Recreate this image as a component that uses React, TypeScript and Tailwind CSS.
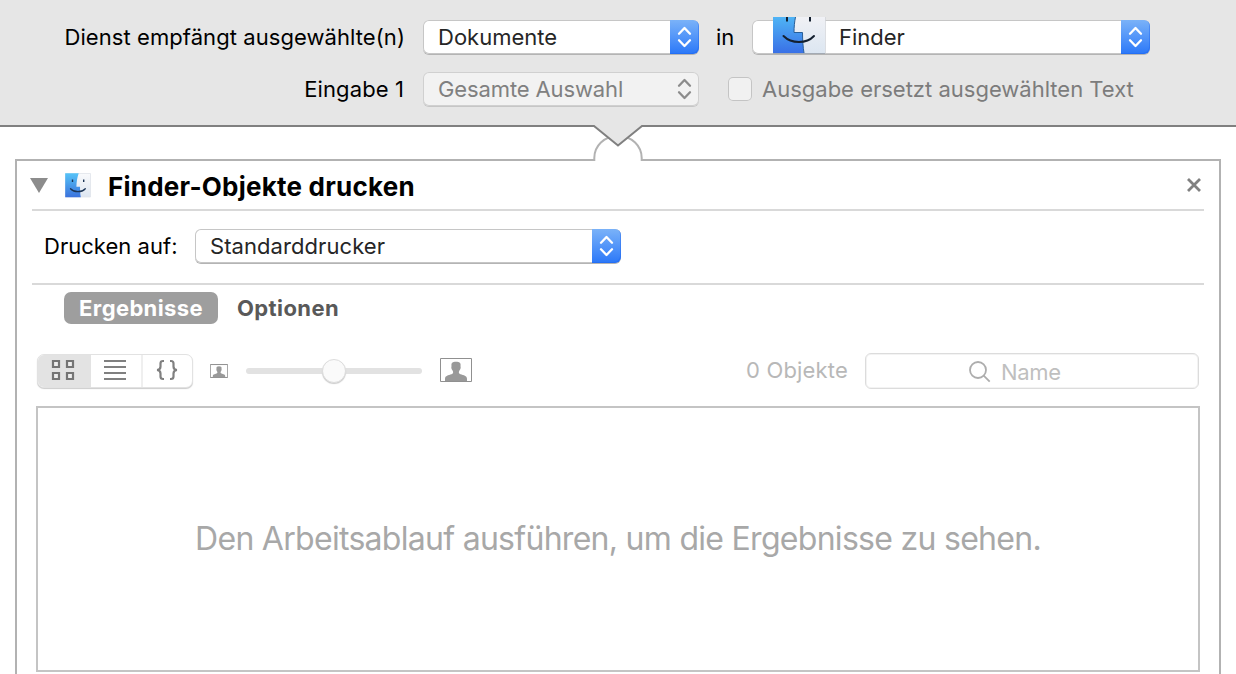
import React from "react";

function Chevrons({ color }: { color: string }) {
  return (
    <svg width="29" height="34" viewBox="0 0 29 34" fill="none" stroke={color} strokeWidth="2.3" strokeLinecap="round" strokeLinejoin="round">
      <path d="M9 13.700l5.500-5.700 5.500 5.700M9 20.300l5.500 5.700 5.500-5.700" />
    </svg>
  );
}

function Stepper() {
  return (
    <div className="h-[34px] w-[29px] shrink-0 rounded-r-[6px] bg-linear-to-b from-[#7ab2f8] to-[#2a77f8] shadow-[inset_-1px_-1px_0_#1c62ee66]">
      <Chevrons color="#fff" />
    </div>
  );
}

function Select({ className, children }: { className: string; children: React.ReactNode }) {
  return (
    <div className={`flex h-[34px] items-center rounded-[6px] bg-white text-[#262626] shadow-[inset_0_0_0_1px_#c6c6c6,0_1px_0_#b4b4b4] ${className}`}>
      <div className="flex h-full flex-1 items-center">{children}</div>
      <Stepper />
    </div>
  );
}

function FinderLarge() {
  return (
    <svg className="ml-[20px] h-[37px] w-[54px] shrink-0 self-end" viewBox="0 0 54 37" fill="none">
      <defs>
        <linearGradient id="lb" x1="0" y1="0" x2="0" y2="1">
          <stop stopColor="#4fb4f5" />
          <stop offset="1" stopColor="#3970e6" />
        </linearGradient>
        <linearGradient id="lw" x1="0" y1="0" x2="0" y2="1">
          <stop stopColor="#f0f1f5" />
          <stop offset="1" stopColor="#dce6f1" />
        </linearGradient>
      </defs>
      <path d="M1 0h52v36H1z" fill="url(#lw)" />
      <path d="M1 0h22.500c-1 5-1.500 10-1.500 15.500h8.500C30.500 23 31 30 32 36H1z" fill="url(#lb)" />
      <path d="M23.500 0c-1 5-1.500 10-1.500 15.500h8.500C30.500 23 31 30 32 36" stroke="#285f98" />
      <path d="M11.500 19c8 8 23 8 30.500 0" stroke="#14202f" strokeWidth="2" strokeLinecap="round" />
      <path d="M15 0v4.500M38 0v4.500" stroke="#14202f" strokeWidth="2" />
      <path d="M1 36.500h52" stroke="#a3aab3" />
      <path d="M53.500 0v36" stroke="#d3d6da" strokeWidth=".8" />
    </svg>
  );
}

function FinderSmall() {
  return (
    <svg className="h-[25px] w-[27px]" viewBox="0 0 27 25" fill="none">
      <defs>
        <linearGradient id="sb" x1="0" y1="0" x2="0" y2="1">
          <stop stopColor="#56c4f8" />
          <stop offset="1" stopColor="#3b72dc" />
        </linearGradient>
        <linearGradient id="sw" x1="0" y1="0" x2="0" y2="1">
          <stop stopColor="#f9fafc" />
          <stop offset="1" stopColor="#dde6f1" />
        </linearGradient>
      </defs>
      <path d="M.5.5h25v23.500H.5z" fill="url(#sw)" stroke="#dfe3ea" strokeWidth=".8" />
      <path d="M.2.2h13.500C12.200 4.500 11.500 9 11.400 13.700H15c0 3.800.2 7 .8 10.500H.2z" fill="url(#sb)" />
      <path d="M5.500 15.700c4 4 11 4 14.800 0" stroke="#1c3557" strokeWidth="1.300" strokeLinecap="round" />
      <path d="M7.500 6.500v2.400M18.700 6.500v2.400" stroke="#1c3557" strokeWidth="1.400" />
    </svg>
  );
}

function Portrait({ className }: { className: string }) {
  return (
    <svg className={className} viewBox="0 0 32 24">
      <path d="M.5.5h31v23H.5z" fill="#fff" stroke="#909090" vectorEffect="non-scaling-stroke" />
      <path d="M11.500 8c-.5-3 1-4.300 4.500-4.300s5 1.300 4.500 4.300c.6 2-.3 3.500-1.200 4.800-.7 1.200-.6 2.400.3 3 2 1.300 7.400 1.300 7.400 5V23H5v-2.200c0-3.700 5.400-3.700 7.400-5 .9-.6 1-1.800.3-3-.9-1.300-1.800-2.800-1.200-4.800z" fill="#999" />
    </svg>
  );
}

export default function App() {
  return (
    <div className="flex h-[674px] w-[1236px] flex-col overflow-hidden bg-white font-['Inter',sans-serif] text-[22px] leading-[34px] whitespace-nowrap text-black">
      <header className="relative h-[127px] shrink-0 border-b-2 border-[#808080] bg-[#e6e6e6] pt-[20px]">
        <div className="flex h-[34px] items-center">
          <div className="flex w-[405px] justify-end"><span className="tracking-[0.07px]">Dienst empfängt ausgewählte(n)</span></div>
          <Select className="ml-[18px] w-[276px]"><span className="pl-[15px]">Dokumente</span></Select>
          <span className="ml-[17px] w-[36px]">in</span>
          <Select className="w-[398px]">
            <FinderLarge />
            <span className="pl-[13px]">Finder</span>
          </Select>
        </div>
        <div className="mt-[18px] flex h-[34px] items-center">
          <div className="flex w-[405px] justify-end pr-px"><span className="tracking-[0.1px]">Eingabe 1</span></div>
          <div className="ml-[18px] flex h-[34px] w-[276px] items-center justify-between rounded-[6px] bg-[#f2f2f2] pl-[15px] text-[#808080] shadow-[inset_0_0_0_1px_#d0d0d0,0_1px_0_#c6c6c6]">
            <span className="tracking-[-0.12px]">Gesamte Auswahl</span>
            <Chevrons color="#8c8c8c" />
          </div>
          <div className="ml-[29px] size-[24px] rounded-[5px] bg-[#f1f1f1] shadow-[inset_0_0_0_1px_#c4c4c4]" />
          <span className="ml-[10px] text-[#7c7c7c]">Ausgabe ersetzt ausgewählten Text</span>
        </div>
        <svg className="absolute top-[125px] left-[590px] z-10 h-[36px] w-[56px]" viewBox="0 0 56 36" fill="none">
          <path d="M5 33h46v3H5z" fill="#fff" />
          <path d="M0 35h4.300v-2C4.300 21 14 11 28 11s23.700 10 23.700 22v2H56" fill="#fff" stroke="#b2b2b2" strokeWidth="2" />
          <path d="M0 0h56v1h-4L28 20.500 4 1H0z" fill="#e6e6e6" />
          <path d="M0 1h4l24 19.500L52 1h4" stroke="#808080" strokeWidth="2" />
        </svg>
      </header>

      <main className="mt-[32px] ml-[15px] h-[560px] w-[1206px] shrink-0 border-2 border-[#b2b2b2]">
        <div className="mx-[15px] flex h-[50px] items-center border-b-2 border-[#d9d9d9]">
          <svg className="-ml-[2px] h-[16px] w-[18px]" viewBox="0 0 18 16"><path d="M0 1h18L9 16z" fill="#8c8c8c" /></svg>
          <div className="ml-[17px] w-[43px]"><FinderSmall /></div>
          <h1 className="flex-1 pt-[3px] text-[26px] font-bold tracking-[0.23px]">Finder-Objekte drucken</h1>
          <svg className="mr-[3px] size-[14px]" viewBox="0 0 14 14" stroke="#808080" strokeWidth="2.800"><path d="M1 1l12 12M13 1L1 13" /></svg>
        </div>
        <div className="mx-[15px] flex h-[74px] items-center border-b-2 border-[#d9d9d9] pb-[2px] pl-[12px]">
          <span className="w-[151px] tracking-[0.03px]">Drucken auf:</span>
          <Select className="w-[426px]"><span className="pl-[15px] tracking-[0.07px]">Standarddrucker</span></Select>
        </div>

        <nav className="mt-[7px] ml-[47px] flex h-[32px] items-center font-bold">
          <span className="flex h-[32px] w-[154px] items-center justify-center rounded-[7px] bg-[#9e9e9e] tracking-[0.37px] text-white">Ergebnisse</span>
          <span className="ml-[19px] tracking-[0.4px] text-[#595959]">Optionen</span>
        </nav>

        <div className="mt-[28px] ml-[20px] flex h-[38px] items-center">
          <div className="flex h-[34px] w-[156px] overflow-hidden rounded-[7px] border border-[#e2e2e2] bg-white shadow-[0_1px_1px_#ccc]">
            <div className="flex w-[53px] items-center justify-center bg-[#e3e3e3] pr-[3px] pb-[2px]">
              <svg className="h-[22px] w-[24px]" viewBox="0 0 24 22" fill="#eee" stroke="#757575" strokeWidth="2.200"><path d="M2 2h6v6h-6zM16 2h6v6h-6zM2 14h6v6h-6zM16 14h6v6h-6z" /></svg>
            </div>
            <div className="flex w-[52px] items-center justify-center border-r-2 border-[#efefef] pr-[2px] pb-[2px]">
              <svg className="h-[20px] w-[22px]" viewBox="0 0 22 20" stroke="#808080" strokeWidth="2"><path d="M0 1h22M0 7h22M0 13h22M0 19h22" /></svg>
            </div>
            <div className="flex flex-1 items-center justify-center pr-[2px] pb-[2px]">
              <svg className="h-[22px] w-[24px]" viewBox="0 0 24 22" fill="none" stroke="#808080" strokeWidth="2.200"><path d="M9 2H8Q5.500 2 5.500 4.500v3Q5.500 10.800 2 11q3.500.2 3.500 3.500v3Q5.500 20 8 20h1M15 2h1q2.500 0 2.500 2.500v3q0 3.300 3.500 3.500-3.500.2-3.500 3.500v3Q18.500 20 16 20h-1" /></svg>
            </div>
          </div>
          <Portrait className="ml-[17px] h-[14px] w-[18px]" />
          <div className="ml-[18px] flex h-[6px] w-[176px] items-center rounded-full bg-[#e2e2e2]">
            <div className="ml-[76px] size-[24px] rounded-full border border-[#ddd] bg-[#fafafa] shadow-[0_1px_1px_#ccc]" />
          </div>
          <Portrait className="mb-[2px] ml-[18px] h-[24px] w-[32px]" />
          <div className="flex w-[376px] justify-end pb-[2px] text-[#b8b8b8]"><span className="tracking-[0.17px]">0 Objekte</span></div>
          <div className="ml-[17px] flex h-[36px] w-[334px] items-center rounded-[6px] border border-[#dcdcdc] pl-[103px] text-[#bfbfbf] shadow-[inset_0_0_0_1px_#f3f3f3]">
            <svg className="mt-[2px] size-[22px]" viewBox="0 0 22 22" fill="none" stroke="#adadad" strokeWidth="1.800"><circle cx="9" cy="9" r="8" /><path d="M14.700 14.700l6 6" /></svg>
            <span className="ml-[10px] pt-[2px] tracking-[-0.3px]">Name</span>
          </div>
        </div>

        <section className="mt-[16px] ml-[19px] flex h-[266px] w-[1164px] items-center justify-center border-2 border-[#c4c4c4] text-[32px] text-[#a8a8a8]">
          <span className="tracking-[-0.71px]">Den Arbeitsablauf ausführen, um die Ergebnisse zu sehen.</span>
        </section>
      </main>
    </div>
  );
}
